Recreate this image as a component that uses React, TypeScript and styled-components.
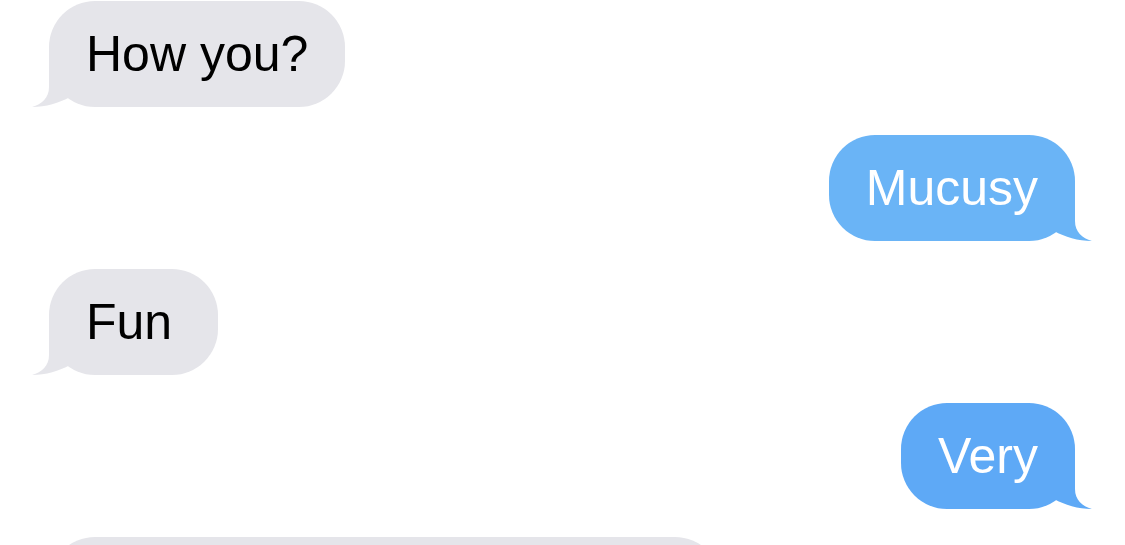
import React from "react";
import styled, { createGlobalStyle } from "styled-components";

const GlobalStyle = createGlobalStyle`
  html, body {
    margin: 0;
    padding: 0;
    background: #ffffff;
    overflow: hidden;
  }
`;

const Thread = styled.div`
  width: 1125px;
  height: 545px;
  box-sizing: border-box;
  padding: 1px 50px 0 49px;
  display: flex;
  flex-direction: column;
  gap: 28px;
  overflow: hidden;
  font-family: "Liberation Sans", Arial, sans-serif;
`;

type Side = "left" | "right";

const Bubble = styled.div<{ $side: Side; $bg: string; $fg: string; $width?: number }>`
  position: relative;
  flex: none;
  align-self: ${(p) => (p.$side === "left" ? "flex-start" : "flex-end")};
  box-sizing: border-box;
  ${(p) => (p.$width ? `width: ${p.$width}px;` : "")}
  min-width: 169px;
  min-height: 106px;
  padding: 23px 37px 22px;
  border-radius: 46px;
  background: ${(p) => p.$bg};
  color: ${(p) => p.$fg};
  font-size: 50px;
  line-height: 61px;
  white-space: nowrap;
`;

const Tail = styled.svg<{ $side: Side; $bg: string }>`
  position: absolute;
  bottom: 0;
  ${(p) => (p.$side === "left" ? "left: -17px;" : "right: -17px; transform: scaleX(-1);")}
  width: 40px;
  height: 50px;
  color: ${(p) => p.$bg};
  display: block;
`;

type Msg = { side: Side; text: string; bg: string; fg: string; width?: number };

const GRAY = "#e5e5ea";

const messages: Msg[] = [
  { side: "left", text: "How you?", bg: GRAY, fg: "#000000" },
  { side: "right", text: "Mucusy", bg: "#6ab4f6", fg: "#ffffff" },
  { side: "left", text: "Fun", bg: GRAY, fg: "#000000" },
  { side: "right", text: "Very", bg: "#5ea9f6", fg: "#ffffff" },
  { side: "left", text: "", bg: GRAY, fg: "#000000", width: 672 },
];

function MessageBubble({ m }: { m: Msg }) {
  return (
    <Bubble $side={m.side} $bg={m.bg} $fg={m.fg} $width={m.width}>
      {m.text}
      <Tail $side={m.side} $bg={m.bg} viewBox="0 0 40 50" aria-hidden="true">
        <path
          d="M17 0 L17 30 C17 41 10 47 0 50 C14 50 27 46 38 40 L38 0 Z"
          fill="currentColor"
        />
      </Tail>
    </Bubble>
  );
}

export default function App() {
  return (
    <>
      <GlobalStyle />
      <Thread>
        {messages.map((m, i) => (
          <MessageBubble key={i} m={m} />
        ))}
      </Thread>
    </>
  );
}
